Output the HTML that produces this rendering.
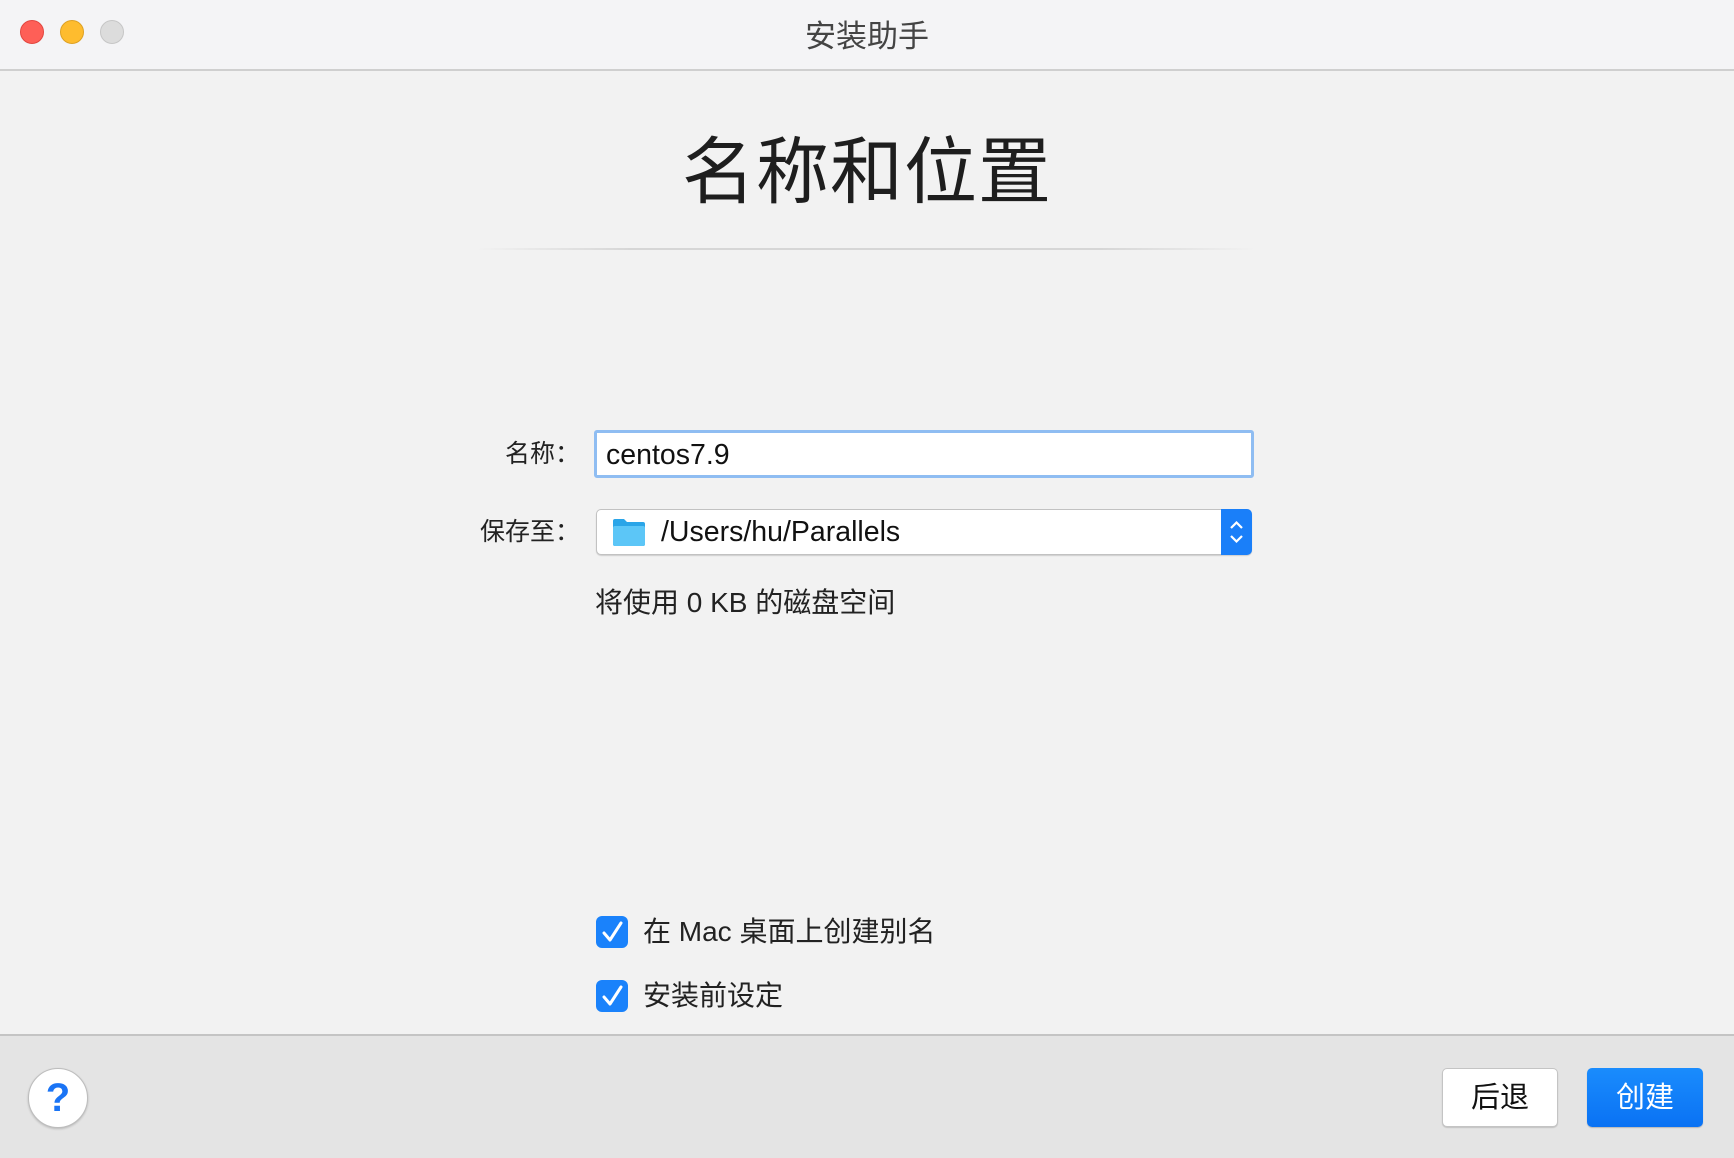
<!DOCTYPE html>
<html><head><meta charset="utf-8"><style>
*{margin:0;padding:0;box-sizing:border-box}
body{width:1734px;height:1158px;background:#f2f2f2;position:relative;overflow:hidden;font-family:"Liberation Sans","Noto Sans CJK SC",sans-serif;color:#222}
.abs{position:absolute}
.tb{left:0;top:0;width:1734px;height:71px;background:#f4f4f6;border-bottom:2px solid #cfcfcf}
.dot{top:20px;width:24px;height:24px;border-radius:50%}
.bot{left:0;top:1034px;width:1734px;height:124px;background:#e4e4e4;border-top:2px solid #c4c4c4}
.cb{width:32px;height:32px;border-radius:6px;background:#1a82fb}
</style></head><body>
<div class="abs tb"></div>
<div class="abs dot" style="left:20px;background:#fe5f57;border:1px solid #e2463f"></div>
<div class="abs dot" style="left:60px;background:#febc2e;border:1px solid #dea123"></div>
<div class="abs dot" style="left:100px;background:#dcdcdc;border:1px solid #c6c6c6"></div>
<div class="abs" style="left:0;width:1734px;top:17px;text-align:center;font-size:31px;color:#444;line-height:40px">安装助手</div>

<div class="abs" style="left:0;width:1734px;top:123px;text-align:center;font-size:73px;line-height:100px;color:#1e1e1e;letter-spacing:1px">名称和位置</div>
<div class="abs" style="left:476px;top:248px;width:780px;height:2px;background:linear-gradient(90deg,rgba(200,200,200,0),#d6d6d6 20%,#d6d6d6 80%,rgba(200,200,200,0))"></div>

<div class="abs" style="left:440px;width:140px;top:437px;text-align:right;font-size:25px;line-height:34px">名称：</div>
<div class="abs" style="left:594px;top:430px;width:660px;height:48px;background:#fff;border:3px solid #8fbdf2;border-radius:3px"></div>
<div class="abs" style="left:606px;top:437px;font-size:28.5px;line-height:36px;color:#111">centos7.9</div>

<div class="abs" style="left:420px;width:160px;top:515px;text-align:right;font-size:25px;line-height:34px">保存至：</div>
<div class="abs" style="left:596px;top:509px;width:656px;height:46px;background:#fff;border:1px solid #c2c2c2;border-radius:5px;box-shadow:0 1px 1px rgba(0,0,0,.15)"></div>
<div class="abs" style="left:1221px;top:509px;width:31px;height:46px;background:#1a7ff9;border-radius:0 5px 5px 0"></div>
<svg class="abs" style="left:1221px;top:509px" width="31" height="46"><path d="M10 19 L15.5 13.5 L21 19 M10 27 L15.5 32.5 L21 27" stroke="#fff" stroke-width="2.2" fill="none"/></svg>
<svg class="abs" style="left:612px;top:517px" width="34" height="30"><path d="M1 4 Q1 2 3 2 L12 2 L15 5 L31 5 Q33 5 33 7 L33 27 Q33 29 31 29 L3 29 Q1 29 1 27Z" fill="#2aa5e8"/><rect x="1" y="9" width="32" height="20" rx="2" fill="#5cc6f7"/></svg>
<div class="abs" style="left:661px;top:514px;font-size:28.5px;line-height:36px;color:#111">/Users/hu/Parallels</div>

<div class="abs" style="left:595px;top:585px;font-size:28px;line-height:36px;color:#222">将使用 0 KB 的磁盘空间</div>

<div class="abs cb" style="left:596px;top:916px"></div>
<svg class="abs" style="left:596px;top:916px" width="32" height="32"><path d="M8 17 L14 24 L25 7" stroke="#fff" stroke-width="3" fill="none" stroke-linecap="round" stroke-linejoin="round"/></svg>
<div class="abs" style="left:643px;top:914px;font-size:28px;line-height:36px">在 Mac 桌面上创建别名</div>
<div class="abs cb" style="left:596px;top:980px"></div>
<svg class="abs" style="left:596px;top:980px" width="32" height="32"><path d="M8 17 L14 24 L25 7" stroke="#fff" stroke-width="3" fill="none" stroke-linecap="round" stroke-linejoin="round"/></svg>
<div class="abs" style="left:643px;top:978px;font-size:28px;line-height:36px">安装前设定</div>

<div class="abs bot"></div>
<div class="abs" style="left:28px;top:1068px;width:60px;height:60px;border-radius:50%;background:#fff;border:1px solid #bdbdbd;box-shadow:0 1px 2px rgba(0,0,0,.2);text-align:center;font-size:40px;font-weight:bold;line-height:58px;color:#1a74f5">?</div>
<div class="abs" style="left:1442px;top:1068px;width:116px;height:59px;background:#fff;border:1px solid #c4c4c4;border-radius:5px;box-shadow:0 1px 1px rgba(0,0,0,.15);text-align:center;font-size:29px;line-height:59px;color:#111">后退</div>
<div class="abs" style="left:1587px;top:1068px;width:116px;height:59px;background:linear-gradient(#1a8cfd,#0a72f4);border-radius:5px;box-shadow:0 1px 1px rgba(0,0,0,.2);text-align:center;font-size:29px;line-height:61px;color:#fff">创建</div>
</body></html>
